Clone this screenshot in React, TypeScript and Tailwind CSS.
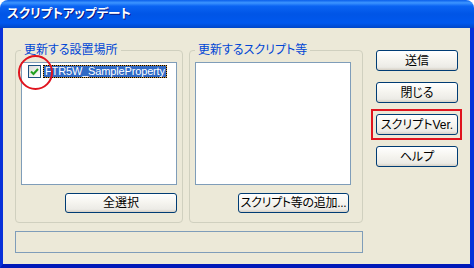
import React from 'react';

const FONT = "font-['Liberation_Sans','Noto_Sans_CJK_JP',sans-serif] [font-feature-settings:'palt']";

function XpButton({ label, className = '' }: { label: string; className?: string }) {
  return (
    <button
      type="button"
      className={`flex items-center justify-center whitespace-nowrap rounded-[3px] border border-[#003C74] bg-[linear-gradient(to_bottom,#FFFFFF_0%,#F6F5F0_45%,#ECEBE6_85%,#D6D0C5_100%)] text-[12px] leading-none text-black ${className}`}
    >
      {label}
    </button>
  );
}

function GroupBox({
  title,
  width,
  children,
}: {
  title: string;
  width: string;
  children: React.ReactNode;
}) {
  return (
    <fieldset className={`${width} rounded-[4px] border border-[#D0D0BF] px-[5px] pb-[9px]`}>
      <legend className="px-[3px] text-[12px] leading-[14px] text-[#0046D5]">{title}</legend>
      {children}
    </fieldset>
  );
}

function CheckMark() {
  return (
    <svg width="11" height="11" viewBox="0 0 11 11">
      <path d="M2 5.5 L4.5 8 L9 3" fill="none" stroke="#21A121" strokeWidth="2" />
    </svg>
  );
}

export default function App() {
  return (
    <div className={`h-[268px] w-[474px] bg-white ${FONT}`}>
      <div className="flex h-full flex-col">
        {/* title bar */}
        <div className="flex h-[28px] items-center rounded-t-[8px] bg-[linear-gradient(to_bottom,#0A5FEB_0%,#3D95FF_10%,#0A63F2_22%,#0055E6_50%,#0058EE_82%,#0046C8_100%)] px-[7px]">
          <span className="text-[12.5px] font-bold text-white [text-shadow:1px_1px_0_#0A1883]">
            スクリプトアップデート
          </span>
        </div>

        {/* body */}
        <div className="flex flex-1 gap-[13px] border-b-[4px] border-l-[3px] border-r-[4px] border-[#0831D9] border-b-[#0019B8] bg-[#ECE9D8] pl-[12px] pr-[12px]">
          <div className="flex w-[348px] flex-col pt-[15px]">
            <div className="flex gap-[6px]">
              <GroupBox title="更新する設置場所" width="w-[168px]">
                <div className="mt-[5px] h-[123px] w-[156px] border border-[#7F9DB9] bg-white pl-[6px] pt-[2px]">
                  <div className="flex items-center gap-[2px]">
                    <div className="relative flex h-[13px] w-[13px] items-center justify-center border border-[#1C5180] bg-[linear-gradient(135deg,#DCDCD7_0%,#FFFFFF_100%)]">
                      <CheckMark />
                      <div className="absolute left-[-11px] top-[-11px] h-[35px] w-[35px] rounded-full border-2 border-[#E0141E]" />
                    </div>
                    <div className="border border-dotted border-black bg-[#CE953A]">
                      <div className="bg-[#316AC5] px-[1px] text-[11px] leading-[11px] tracking-[-0.15px] text-white">
                        FTR5W_SampleProperty
                      </div>
                    </div>
                  </div>
                </div>
                <div className="mt-[8px] flex justify-end">
                  <XpButton label="全選択" className="h-[20px] w-[112px]" />
                </div>
              </GroupBox>

              <GroupBox title="更新するスクリプト等" width="w-[174px]">
                <div className="mt-[5px] h-[123px] w-[156px] border border-[#7F9DB9] bg-white" />
                <div className="mt-[8px] flex justify-end pr-[8px]">
                  <XpButton label="スクリプト等の追加..." className="h-[20px] w-[111px] tracking-[-0.3px]" />
                </div>
              </GroupBox>
            </div>

            {/* status bar */}
            <div className="mt-[8px] h-[22px] w-full border border-[#7F9DB9] bg-[#ECE9D8]" />
          </div>

          <div className="flex w-[82px] flex-col gap-[11px] pt-[22px]">
            <XpButton label="送信" className="h-[21px] w-[82px]" />
            <XpButton label="閉じる" className="h-[21px] w-[82px]" />
            <div className="relative">
              <XpButton label="スクリプトVer." className="h-[21px] w-[82px]" />
              <div className="absolute bottom-[-5px] left-[-5px] right-[-4px] top-[-5px] border-2 border-[#E0141E]" />
            </div>
            <XpButton label="ヘルプ" className="h-[21px] w-[82px]" />
          </div>
        </div>
      </div>
    </div>
  );
}
